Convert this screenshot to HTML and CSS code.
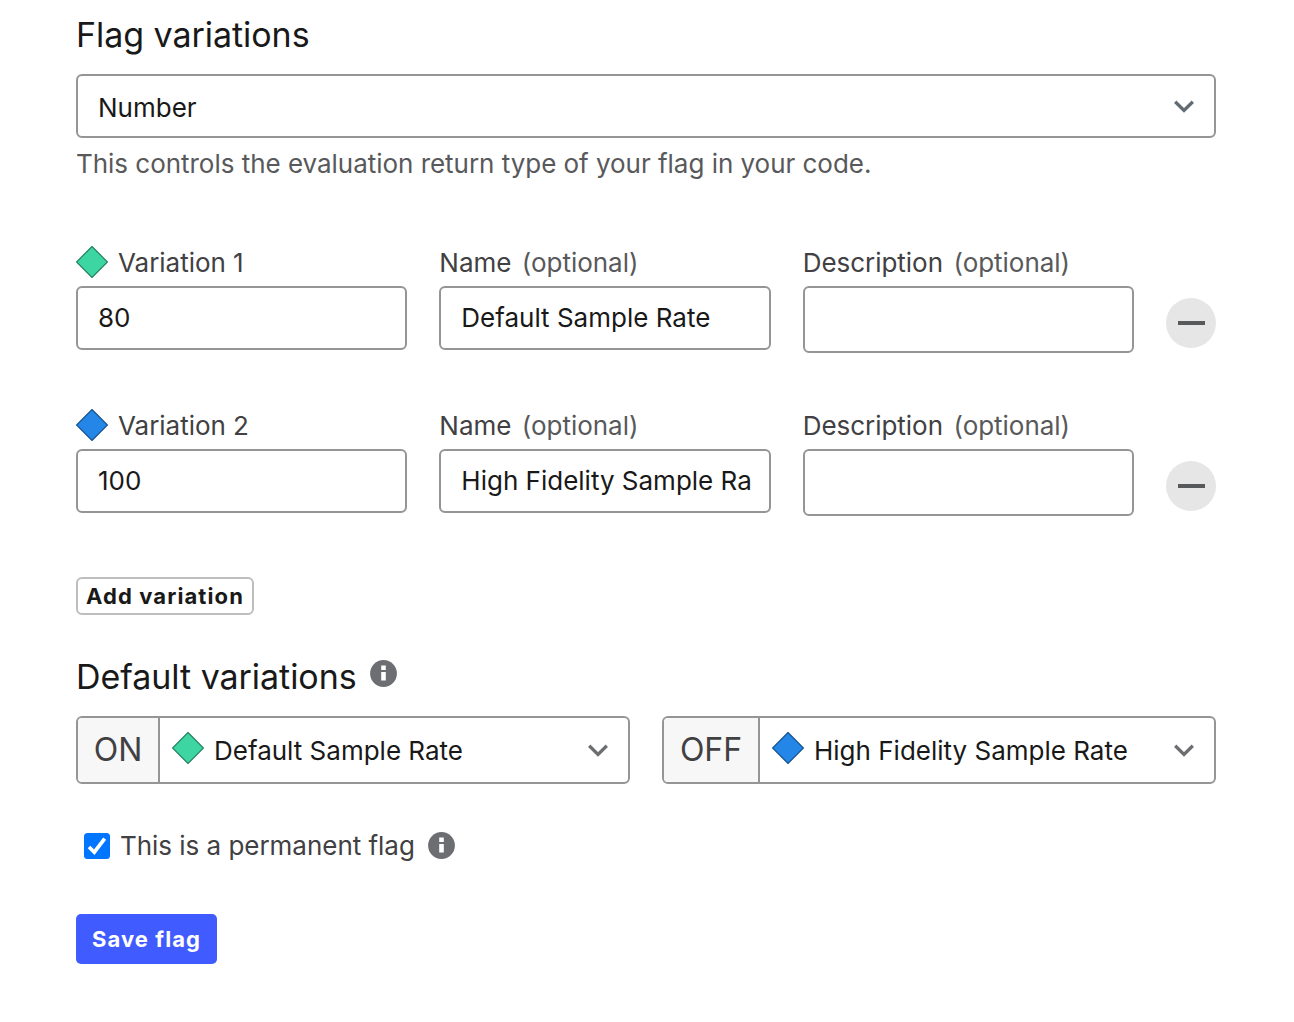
FILE: index.html
```html
<!DOCTYPE html>
<html lang="en">
<head>
<meta charset="utf-8">
<title>Flag variations</title>
<link rel="stylesheet" href="styles.css">
</head>
<body>
<svg width="0" height="0" class="sprite">
  <symbol id="chevron" viewBox="0 0 20 13"><path d="M1.2 1.8 10 10.4l8.8-8.6" fill="none" stroke="currentColor" stroke-width="3.3"/></symbol>
  <symbol id="diamond" viewBox="0 0 32 32"><path d="M16 .5 31.5 16 16 31.5.5 16z" stroke-width="1.2"/></symbol>
  <symbol id="info" viewBox="0 0 27 27"><circle cx="13.5" cy="13.5" r="13.4" fill="#6d6e71"/><path d="M11.2 5.5h4.6v4.4h-4.6zM11.2 11.9h4.6v8.5h-4.6z" fill="#fff"/></symbol>
</svg>
<form class="form">
  <h2 class="heading">Flag variations</h2>
  <div class="select select-type"><span class="select-value">Number</span><svg class="chevron chevron-type"><use href="#chevron"/></svg></div>
  <p class="help">This controls the evaluation return type of your flag in your code.</p>

  <div class="variation">
    <div class="field">
      <div class="label"><svg class="diamond green"><use href="#diamond"/></svg><span>Variation 1</span></div>
      <div class="input">80</div>
    </div>
    <div class="field">
      <div class="label">Name <span class="optional">(optional)</span></div>
      <div class="input"><span class="clip">Default Sample Rate</span></div>
    </div>
    <div class="field">
      <div class="label">Description <span class="optional">(optional)</span></div>
      <div class="input textarea"></div>
    </div>
    <div class="remove"><span class="minus"></span></div>
  </div>

  <div class="variation">
    <div class="field">
      <div class="label"><svg class="diamond blue"><use href="#diamond"/></svg><span>Variation 2</span></div>
      <div class="input">100</div>
    </div>
    <div class="field">
      <div class="label">Name <span class="optional">(optional)</span></div>
      <div class="input"><span class="clip">High Fidelity Sample Ra</span></div>
    </div>
    <div class="field">
      <div class="label">Description <span class="optional">(optional)</span></div>
      <div class="input textarea"></div>
    </div>
    <div class="remove"><span class="minus"></span></div>
  </div>

  <div class="add">Add variation</div>

  <h2 class="heading heading-default"><span>Default variations</span><svg class="info"><use href="#info"/></svg></h2>
  <div class="defaults">
    <div class="select group">
      <span class="addon addon-on">ON</span>
      <svg class="diamond green"><use href="#diamond"/></svg>
      <span class="select-value">Default Sample Rate</span>
      <svg class="chevron"><use href="#chevron"/></svg>
    </div>
    <div class="select group">
      <span class="addon addon-off">OFF</span>
      <svg class="diamond blue"><use href="#diamond"/></svg>
      <span class="select-value">High Fidelity Sample Rate</span>
      <svg class="chevron"><use href="#chevron"/></svg>
    </div>
  </div>

  <div class="permanent">
    <svg class="check" viewBox="0 0 26 26"><rect width="26" height="26" rx="3.5" fill="#0075ff"/><path d="M5 14 10.3 19.2 20.7 5.6" fill="none" stroke="#fff" stroke-width="3.7"/></svg>
    <span>This is a permanent flag</span>
    <svg class="info"><use href="#info"/></svg>
  </div>
  <div class="save">Save flag</div>
</form>
</body>
</html>
```
FILE: styles.css
```css
* { box-sizing: border-box; }
body {
  margin: 0;
  background: #fff;
  color: #191919;
  font: 400 26px/32px Inter, "Liberation Sans", sans-serif;
}
.sprite { display: none; }
svg { display: block; flex: none; }
.form { width: 1140px; margin: 0 0 0 76px; padding-top: 15px; }
.heading {
  margin: 0 0 19px;
  font-size: 34px;
  line-height: 40px;
  font-weight: 400;
  letter-spacing: -0.05px;
}
.select {
  display: flex;
  align-items: center;
  border: 2px solid #939597;
  border-radius: 6px;
  background: #fff;
}
.select-value { flex: 1; white-space: nowrap; padding-top: 2px; }
.select-type { height: 64px; padding: 0 20px; }
.select-type .select-value { padding-top: 4px; }
.chevron { width: 20px; height: 13px; margin-right: 20px; color: #6d6e71; }
.chevron-type { margin-right: 0; color: #636b72; }
.help { margin: 10px 0 66px; color: #58595b; letter-spacing: -0.03px; white-space: nowrap; }
.variation { display: flex; gap: 32px; height: 163px; }
.field { flex: 1 1 0; min-width: 0; }
.label {
  display: flex;
  align-items: center;
  height: 34px;
  margin-bottom: 6px;
  color: #414042;
  letter-spacing: -0.03px;
  white-space: nowrap;
}
.label .diamond { margin: -2px 10px 0 0; }
.optional { margin-left: 10.5px; color: #58595b; }
.diamond { width: 32px; height: 32px; overflow: visible; }
.green { fill: #3dd6a3; stroke: #247f61; }
.blue { fill: #2486e6; stroke: #17528c; }
.input {
  display: flex;
  align-items: center;
  height: 64px;
  padding: 0 16px 0 20px;
  border: 2px solid #939597;
  border-radius: 6px;
}
.textarea { height: 67px; }
.clip { overflow: hidden; white-space: nowrap; }
.remove {
  display: flex;
  align-items: center;
  justify-content: center;
  width: 50px;
  height: 50px;
  margin-top: 52px;
  padding-left: 1px;
  border-radius: 50%;
  background: #e6e6e6;
}
.minus { width: 27px; height: 4px; background: #58595b; }
.add {
  width: 178px;
  height: 38px;
  margin: 5px 0 42px;
  border: 2px solid #bcbec0;
  border-radius: 6px;
  font-size: 22px;
  line-height: 34px;
  font-weight: 700;
  letter-spacing: 1.1px;
  text-align: center;
  white-space: nowrap;
}
.heading-default { display: flex; align-items: center; }
.info { width: 27px; height: 27px; margin: -8px 0 0 13px; }
.defaults { display: grid; grid-template-columns: 1fr 1fr; gap: 32px; }
.group { height: 68px; overflow: hidden; }
.addon {
  align-self: stretch;
  display: flex;
  align-items: center;
  justify-content: center;
  border-right: 2px solid #939597;
  background: #f7f7f7;
  color: #414042;
  font-size: 32px;
  font-weight: 400;
}
.addon-on { width: 82px; }
.addon-off { width: 96px; }
.group .diamond { margin: -4px 10px 0 12px; }
.permanent { display: flex; align-items: center; height: 32px; margin: 46px 0 52px 8px; color: #414042; letter-spacing: -0.03px; }
.check { width: 26px; height: 26px; margin-right: 10px; }
.permanent .info { margin-top: -2px; }
.save {
  width: 141px;
  height: 50px;
  border-radius: 5px;
  background: #405bff;
  color: #fff;
  font-size: 22px;
  line-height: 50px;
  font-weight: 700;
  letter-spacing: 1.1px;
  text-align: center;
}
```
